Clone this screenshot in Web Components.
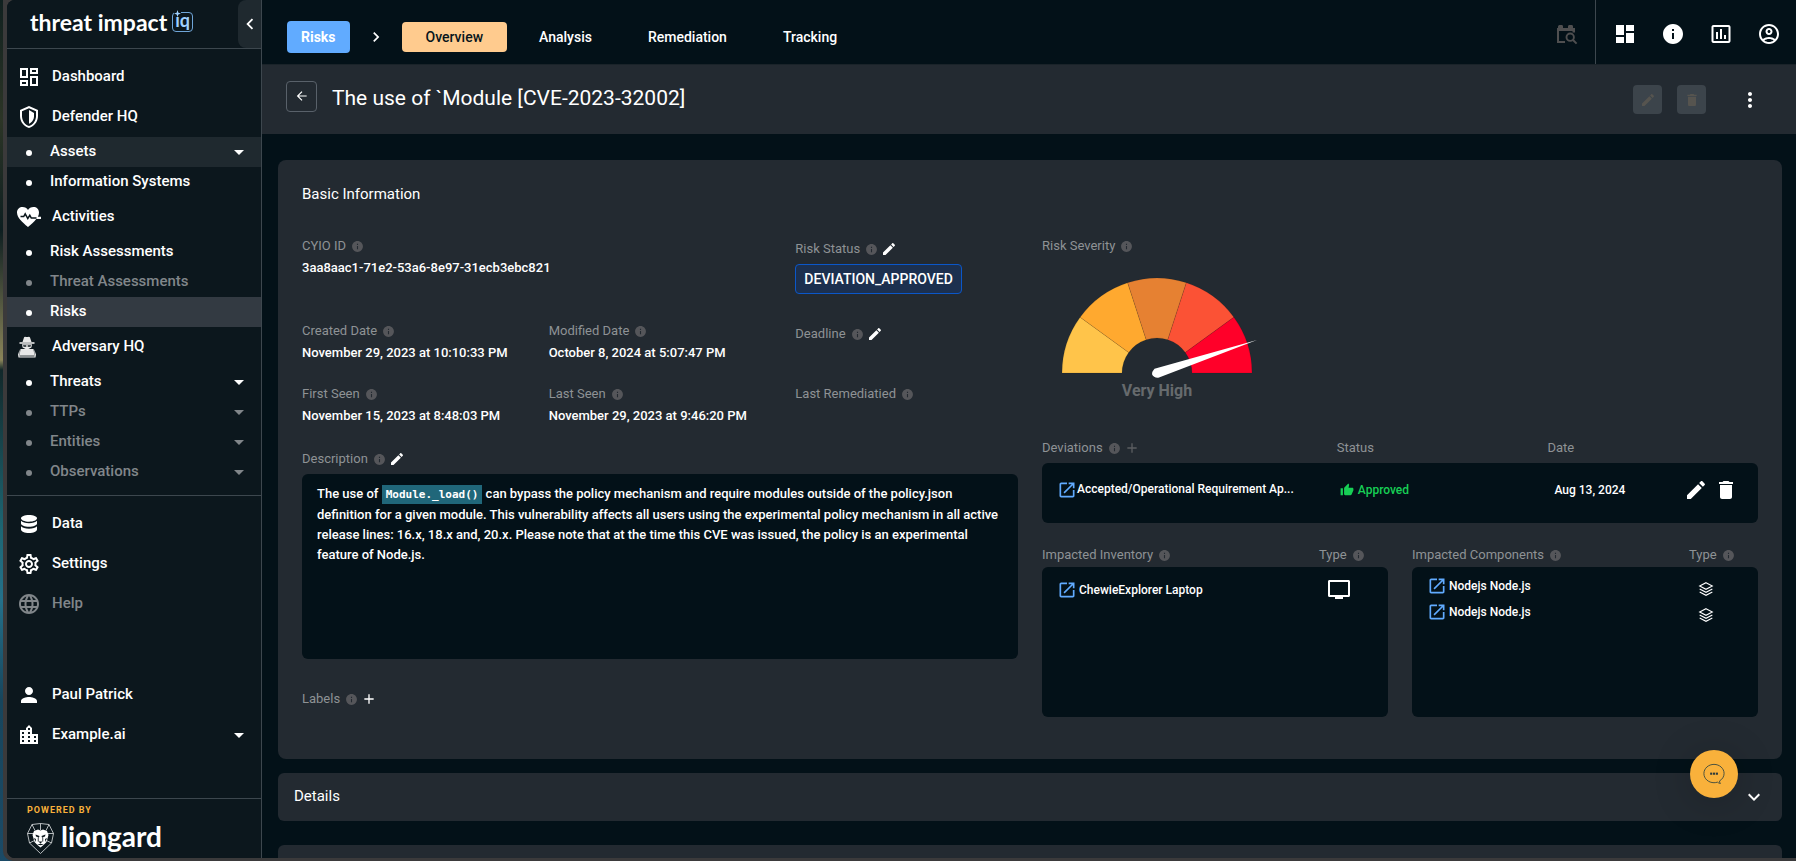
<!DOCTYPE html>
<html lang="en">
<head>
<meta charset="utf-8">
<title>Threat Impact IQ – Risk overview</title>
<style>
html, body { margin: 0; height: 100%; }
body {
  --bg: #031118; --panel: #232a31; --side: #0c171d; --side-open: #1f292f; --side-active: #333a42;
  --line: #3d474e; --muted: #8e9295; --dim: #55565a; --frame: #3b3a3b; --blue: #61abff; --amber: #f9b13b;
  font-family: Roboto, "Liberation Sans", sans-serif; font-size: 13px; line-height: 20px; font-weight: 500; color: #fff;
  background: linear-gradient(#10201f 0, #2c3526 120px, #0d1e20 230px, #8a8459 360px, #12282a 370px, #1d6673 530px, #24708a 600px, #17455c 700px, #1b4a66 861px);
  overflow: hidden;
}
</style>
</head>
<body>
<app-window>
  <side-nav slot="side"></side-nav>
  <top-bar></top-bar>
  <page-header heading="The use of `Module [CVE-2023-32002]"></page-header>
  <risk-page></risk-page>
</app-window>
<chat-launcher></chat-launcher>

<script>
const P = d => `<path d="${d}"/>`;
const ICONS = {
  dashboardOutline: P('M19 5v2h-4V5h4M9 5v6H5V5h4m10 8v6h-4v-6h4M9 17v2H5v-2h4M21 3h-8v6h8V3zM11 3H3v10h8V3zm10 8h-8v10h8V11zm-10 4H3v6h8v-6z'),
  dashboard: P('M3 13h8V3H3v10zm0 8h8v-6H3v6zm10 0h8V11h-8v10zm0-18v6h8V3h-8z'),
  shield: P('M21 11c0 5.55-3.84 10.74-9 12-5.16-1.26-9-6.45-9-12V5l9-4 9 4v6m-9 10c3.75-1 7-5.46 7-9.78V6.3l-7-3.12L5 6.3v4.92C5 15.54 8.25 20 12 21z') + P('M12 5l5 3v3.5c0 3-2.2 6-5 7.2z'),
  heart: P('M11 22C5 17 0 12.500 0 7.500 0 4 2.700 2 5.500 2 8 2 10 3.300 11 5c1-1.700 3-3 5.500-3C19.500 2 22 4 22 7.500c0 1.500-.4 2.900-1.100 4.200H24v2.400h-4.700C17.300 16.900 14.300 19.300 11 22z') + '<path d="M3.500 11.500h3.200l1.500-2.700 2.600 4.700 2-3.200 1.500 2.700h5.200" fill="none" stroke="#0c171d" stroke-width="1.500"/>',
  spy: '<g fill="#e8e8e8"><path d="M7 2.500C7.500 1 9 2 10 2s2.500-1 3 .5L14.500 7H5.500z"/><path d="M2.500 7.200h15v1.600h-15z"/><path d="M5 9.300h10l-.6 3.200-4.400 2.200-4.400-2.200z"/><path d="M3.500 14h13l1 6.500h-15z"/><path d="M2.800 14.500L1 19.500l.5 3h17l.5-3-1.800-5 .3 6H2.500z"/></g><path d="M6 10.300h3.300v1.500H6.600zM10.700 10.300H14l-.6 1.500h-2.700z" fill="#0c171d"/><path d="M2.500 21.200h15" stroke="#0c171d" stroke-width=".6"/>',
  data: P('M12 3c4.400 0 8 1.450 8 3.250S16.400 9.700 12 9.700 4 8.100 4 6.250 7.600 3 12 3z') + P('M4 8.700c1.300 1.500 4.300 2.500 8 2.500s6.700-1 8-2.500v2.700c0 1.800-3.600 3.300-8 3.300s-8-1.500-8-3.300z') + P('M4 14.300c1.300 1.500 4.300 2.400 8 2.400s6.700-.9 8-2.400v3.200C20 19.400 16.400 21 12 21s-8-1.600-8-3.500z'),
  settings: P('M19.430 12.980c.04-.32.07-.64.07-.98 0-.34-.03-.66-.07-.98l2.110-1.650c.19-.15.24-.42.12-.64l-2-3.460c-.09-.16-.26-.25-.44-.25-.06 0-.12.010-.17.030l-2.490 1c-.52-.4-1.080-.73-1.690-.98l-.38-2.650C14.460 2.180 14.250 2 14 2h-4c-.25 0-.46.18-.49.42l-.38 2.650c-.61.25-1.170.59-1.690.98l-2.490-1c-.06-.02-.12-.03-.18-.03-.17 0-.34.09-.43.25l-2 3.460c-.13.22-.07.49.12.64l2.110 1.650c-.04.32-.07.65-.07.98 0 .33.030.66.070.98l-2.110 1.650c-.19.15-.24.42-.12.64l2 3.460c.09.16.26.25.44.25.06 0 .12-.01.17-.03l2.490-1c.52.4 1.080.73 1.690.98l.38 2.650c.03.24.24.42.49.42h4c.25 0 .46-.18.49-.42l.38-2.650c.61-.25 1.170-.59 1.690-.98l2.490 1c.06.02.12.03.18.03.17 0 .34-.09.43-.25l2-3.460c.12-.22.07-.49-.12-.64l-2.110-1.650zm-1.980-1.710c.04.31.05.52.05.73 0 .21-.02.43-.05.73l-.14 1.130.89.7 1.080.84-.7 1.210-1.270-.51-1.040-.42-.9.680c-.43.32-.84.56-1.250.73l-1.060.43-.16 1.130-.2 1.350h-1.400l-.19-1.350-.16-1.130-1.060-.43c-.43-.18-.83-.41-1.230-.71l-.91-.7-1.060.43-1.270.51-.7-1.210 1.080-.84.89-.7-.14-1.130c-.03-.31-.05-.54-.05-.74s.02-.43.05-.73l.14-1.130-.89-.7-1.080-.84.7-1.210 1.270.51 1.040.42.9-.68c.43-.32.84-.56 1.250-.73l1.060-.43.16-1.130.2-1.350h1.390l.19 1.350.16 1.130 1.060.43c.43.18.83.41 1.230.71l.91.7 1.060-.43 1.270-.51.7 1.210-1.070.85-.89.7.14 1.130zM12 8c-2.210 0-4 1.790-4 4s1.790 4 4 4 4-1.790 4-4-1.790-4-4-4zm0 6c-1.100 0-2-.9-2-2s.9-2 2-2 2 .9 2 2-.9 2-2 2z'),
  globe: P('M11.990 2C6.470 2 2 6.480 2 12s4.470 10 9.990 10C17.520 22 22 17.520 22 12S17.520 2 11.990 2zm6.930 6h-2.950c-.32-1.250-.78-2.450-1.380-3.560 1.840.63 3.370 1.910 4.330 3.560zM12 4.040c.83 1.200 1.480 2.530 1.910 3.960h-3.820c.43-1.430 1.080-2.760 1.910-3.960zM4.260 14C4.100 13.360 4 12.690 4 12s.1-1.360.26-2h3.380c-.08.66-.14 1.320-.14 2 0 .68.06 1.340.14 2H4.260zm.82 2h2.950c.32 1.250.78 2.450 1.380 3.560-1.840-.63-3.370-1.900-4.330-3.560zm2.950-8H5.080c.96-1.660 2.490-2.930 4.330-3.560C8.810 5.550 8.350 6.750 8.030 8zM12 19.960c-.83-1.200-1.480-2.530-1.910-3.960h3.820c-.43 1.430-1.080 2.760-1.910 3.960zM14.340 14H9.660c-.09-.66-.16-1.320-.16-2 0-.68.07-1.350.16-2h4.680c.09.65.16 1.320.16 2 0 .68-.07 1.340-.16 2zm.25 5.560c.6-1.110 1.060-2.310 1.380-3.560h2.950c-.96 1.650-2.490 2.930-4.330 3.560zM16.360 14c.08-.66.14-1.320.14-2 0-.68-.06-1.340-.14-2h3.380c.16.64.26 1.310.26 2s-.1 1.360-.26 2h-3.380z'),
  person: P('M12 12c2.210 0 4-1.790 4-4s-1.790-4-4-4-4 1.790-4 4 1.790 4 4 4zm0 2c-2.670 0-8 1.340-8 4v2h16v-2c0-2.660-5.330-4-8-4z'),
  city: P('M15 11V5l-3-3-3 3v2H3v14h18V11h-6zm-8 8H5v-2h2v2zm0-4H5v-2h2v2zm0-4H5V9h2v2zm6 8h-2v-2h2v2zm0-4h-2v-2h2v2zm0-4h-2V9h2v2zm0-4h-2V5h2v2zm6 12h-2v-2h2v2zm0-4h-2v-2h2v2z'),
  info: P('M12 2C6.480 2 2 6.480 2 12s4.480 10 10 10 10-4.480 10-10S17.520 2 12 2zm1 15h-2v-6h2v6zm0-8h-2V7h2v2z'),
  chart: P('M9 17H7v-7h2v7zm4 0h-2V7h2v10zm4 0h-2v-4h2v4zm2.500 2.100h-15V5h15v14.100zm0-16.100h-15c-1.100 0-2 .9-2 2v14c0 1.100.9 2 2 2h15c1.100 0 2-.9 2-2V5c0-1.100-.9-2-2-2z'),
  account: P('M12 2C6.480 2 2 6.480 2 12s4.480 10 10 10 10-4.480 10-10S17.520 2 12 2zM7.350 18.500C8.660 17.560 10.260 17 12 17s3.340.56 4.650 1.500C15.340 19.440 13.740 20 12 20s-3.340-.56-4.650-1.500zm10.790-1.380C16.450 15.800 14.320 15 12 15s-4.450.8-6.140 2.120C4.700 15.730 4 13.950 4 12c0-4.420 3.580-8 8-8s8 3.580 8 8c0 1.950-.7 3.730-1.860 5.120zM12 6c-1.930 0-3.500 1.570-3.500 3.500S10.070 13 12 13s3.500-1.570 3.500-3.500S13.930 6 12 6zm0 5c-.83 0-1.500-.67-1.500-1.500S11.170 8 12 8s1.500.67 1.500 1.500S12.830 11 12 11z'),
  edit: P('M3 17.250V21h3.750L17.810 9.940l-3.750-3.750L3 17.250zM20.710 7.040c.39-.39.39-1.020 0-1.410l-2.340-2.340c-.39-.39-1.020-.39-1.410 0l-1.830 1.830 3.750 3.750 1.830-1.830z'),
  trash: P('M6 19c0 1.100.9 2 2 2h8c1.100 0 2-.9 2-2V7H6v12zM19 4h-3.500l-1-1h-5l-1 1H5v2h14V4z'),
  more: P('M12 8c1.100 0 2-.9 2-2s-.9-2-2-2-2 .9-2 2 .9 2 2 2zm0 2c-1.100 0-2 .9-2 2s.9 2 2 2 2-.9 2-2-.9-2-2-2zm0 6c-1.100 0-2 .9-2 2s.9 2 2 2 2-.9 2-2-.9-2-2-2z'),
  launch: P('M19 19H5V5h7V3H5c-1.110 0-2 .9-2 2v14c0 1.100.89 2 2 2h14c1.100 0 2-.9 2-2v-7h-2v7zM14 3v2h3.590l-9.830 9.830 1.410 1.410L19 6.410V10h2V3h-7z'),
  thumb: P('M1 21h4V9H1v12zm22-11c0-1.100-.9-2-2-2h-6.310l.95-4.570.03-.32c0-.41-.17-.79-.44-1.060L14.170 1 7.590 7.590C7.220 7.950 7 8.450 7 9v10c0 1.100.9 2 2 2h9c.83 0 1.540-.5 1.840-1.220l3.020-7.050c.09-.23.14-.47.14-.73v-2z'),
  plus: P('M19 13h-6v6h-2v-6H5v-2h6V5h2v6h6v2z'),
  caret: P('M7 10l5 5 5-5z'),
  chevronLeft: P('M15.410 7.410L14 6l-6 6 6 6 1.410-1.410L10.830 12z'),
  chevronRight: P('M8.590 16.590L10 18l6-6-6-6-1.410 1.410L13.170 12z'),
  chevronDown: P('M7.410 8.590L12 13.170l4.590-4.580L18 10l-6 6-6-6z'),
  back: '<path d="M20 12H4.500M12 4.500L4.500 12l7.500 7.500" fill="none" stroke="currentColor" stroke-width="2"/>',
  findInWork: P('M4 6V4.500C4 3.500 5 3 6 3h1.500C8.600 3 9 3.700 9 4.500V6h5V4.500c0-.9.6-1.500 1.500-1.500h2c1 0 1.500.6 1.500 1.500V6h2v4.500h-2.500V9H5v10h6v2H3V6z') + '<circle cx="16.200" cy="15.200" r="3.700" fill="none" stroke="currentColor" stroke-width="1.900"/><path d="M19 18l3.600 3.600" stroke="currentColor" stroke-width="2"/>',
  monitor: P('M21.500 2h-19C1.600 2 1 2.700 1 3.500v14c0 .8.600 1.500 1.500 1.500H8v2h8v-2h5.500c.9 0 1.500-.7 1.500-1.500v-14c0-.8-.6-1.500-1.500-1.500zM21 17H3V4h18z'),
  layers: '<g fill="none" stroke="currentColor" stroke-width="1.600"><path d="M12 2.500l9.500 5-9.500 5-9.500-5z"/><path d="M2.500 12l9.500 5 9.500-5M2.500 16.500l9.500 5 9.500-5"/></g>',
  chat: '<path d="M12 1.500C6 1.500 1 5.800 1 11.500s5 10 11 10c1.300 0 2.600-.2 3.800-.6.800.8 2 1.300 3.200 1.400-.7-.8-1-1.800-1-2.700 3-1.800 5-4.700 5-8.100 0-5.700-5-10-11-10z" fill="none" stroke="#3c4a3f" stroke-width="1"/><g fill="#2c3a3c"><rect x="7.800" y="10.500" width="2.300" height="2.300"/><rect x="10.900" y="10.500" width="2.300" height="2.300"/><rect x="14" y="10.500" width="2.300" height="2.300"/></g>'
};

/* Small base: every element clones its own template into an open root. */
class Base extends HTMLElement {
  connectedCallback() {
    if (this.shadowRoot) return;
    const t = document.createElement('template');
    t.innerHTML = `<style>:host,*{box-sizing:border-box}a{color:inherit;text-decoration:none}button{font:inherit;color:inherit;background:none;border:0;padding:0;margin:0;display:inline-flex;align-items:center;justify-content:center;cursor:pointer}ul,h1,h2,p{margin:0;padding:0;font:inherit;list-style:none}${this.css()}</style>${this.html()}`;
    this.attachShadow({ mode: 'open' }).append(t.content.cloneNode(true));
  }
  at(n) { return this.getAttribute(n) || ''; }
}

customElements.define('ui-icon', class extends Base {
  css() { const s = this.at('size') || 24; return `:host{display:inline-flex;flex:none;width:${s}px;height:${s}px}svg{width:100%;height:100%;fill:currentColor}`; }
  html() { return `<svg viewBox="0 0 24 24" aria-hidden="true">${ICONS[this.at('name')]}</svg>`; }
});

customElements.define('app-window', class extends Base {
  css() { return `
    :host{display:block;height:100vh;padding-left:3px}
    .frame{height:100%;border-left:4px solid var(--frame);border-bottom:3px solid var(--frame);border-bottom-left-radius:10px;background:var(--frame)}
    .inner{display:grid;grid-template-columns:255px minmax(0,1fr);height:100%;border-radius:8px 0 0 8px;overflow:hidden;background:var(--bg)}
    main{min-width:0;overflow:hidden}`; }
  html() { return `<div class="frame"><div class="inner"><slot name="side"></slot><main><slot></slot></main></div></div>`; }
});

customElements.define('nav-item', class extends Base {
  css() { return `
    :host{display:block}
    a{display:flex;align-items:center;height:40px;padding:0 10px;font-size:15px}
    ui-icon[name]{margin-right:11px}
    span{flex:1;padding-bottom:2px}
    a.sub{height:30px}
    .dot{width:6px;height:6px;border-radius:50%;background:currentColor;margin:2px 18px 0 9px;flex:none}
    :host([off]){color:#81868a}
    :host([open]){background:var(--side-open)}
    :host([active]){background:var(--side-active)}
    ui-icon.caret{margin:0}`; }
  html() {
    const sub = this.hasAttribute('sub');
    return `<a href="#" class="${sub ? 'sub' : ''}">${sub ? '<i class="dot"></i>' : `<ui-icon name="${this.at('icon')}"></ui-icon>`}<span><slot></slot></span>${this.hasAttribute('more') ? '<ui-icon class="caret" name="caret"></ui-icon>' : ''}</a>`;
  }
});

customElements.define('side-nav', class extends Base {
  css() { return `
    :host{display:flex;flex-direction:column;background:var(--side);border-right:1px solid var(--line);min-height:0}
    .brand{display:flex;height:49px;border-bottom:1px solid var(--line);padding-left:23px;flex:none}
    .name{flex:1;display:flex;align-items:center;gap:5px;font:700 23px/28px Lato,"Liberation Sans",sans-serif;padding-bottom:4px}
    .iq{position:relative;width:21px;height:20px;border:1px solid #6fa5d8;border-radius:4px;color:#9fd0ff;font-size:18px;line-height:14px;text-align:center}
    .iq svg{position:absolute;left:1px;top:-3px;width:7px;height:7px;fill:#9fd0ff;background:var(--side)}
    .fold{width:23px;background:var(--side-open);border-radius:8px 0 0 8px}
    nav{flex:none;padding:8px 0}
    nav+nav{border-top:1px solid var(--line)}
    .account{margin-top:auto;padding-bottom:43px}
    footer{flex:none;height:60px;border-top:1px solid var(--line);padding:4px 0 0 20px}
    .by{font-size:9px;line-height:14px;font-weight:700;color:var(--amber);letter-spacing:1px}
    .lion{display:flex;align-items:center;gap:7px;font:700 28px/32px Lato,"Liberation Sans",sans-serif;margin-top:3px}
    .lion svg{width:27px;height:31px}
    .lion span{padding-bottom:4px}`; }
  html() { return `
    <div class="brand"><div class="name"><span>threat impact</span><span class="iq">iq<svg viewBox="0 0 8 8"><path d="M4 0l1 3 3 1-3 1-1 3-1-3-3-1 3-1z"/></svg></span></div>
      <button class="fold" aria-label="Collapse menu"><ui-icon name="chevronLeft" size="22"></ui-icon></button></div>
    <nav aria-label="Main">
      <nav-item icon="dashboardOutline">Dashboard</nav-item>
      <nav-item icon="shield">Defender HQ</nav-item>
      <nav-item sub more open>Assets</nav-item>
      <nav-item sub>Information Systems</nav-item>
      <nav-item icon="heart">Activities</nav-item>
      <nav-item sub>Risk Assessments</nav-item>
      <nav-item sub off>Threat Assessments</nav-item>
      <nav-item sub active>Risks</nav-item>
      <nav-item icon="spy">Adversary HQ</nav-item>
      <nav-item sub more>Threats</nav-item>
      <nav-item sub more off>TTPs</nav-item>
      <nav-item sub more off>Entities</nav-item>
      <nav-item sub more off>Observations</nav-item>
    </nav>
    <nav aria-label="Tools">
      <nav-item icon="data">Data</nav-item>
      <nav-item icon="settings">Settings</nav-item>
      <nav-item icon="globe" off>Help</nav-item>
    </nav>
    <div class="account">
      <nav-item icon="person">Paul Patrick</nav-item>
      <nav-item icon="city" more>Example.ai</nav-item>
    </div>
    <footer><div class="by">POWERED BY</div>
      <div class="lion"><svg viewBox="0 0 27 31" aria-hidden="true">
        <g fill="none" stroke="#dfe3e5" stroke-width=".8"><path d="M5 1.500L13.500.5 22 1.500l4.500 9-2 9.500-11 10.500L2.500 20l-2-9.500z"/><path d="M5 1.500l3 6M22 1.500l-3 6M.5 10.500l7 0M26.500 10.500h-7M2.500 20l6-3M24.500 20l-6-3M13.500.5V7"/></g>
        <path d="M7 8l4-1.500 2.500 1 2.500-1L20 8l1.500 4-2 7-3 3-3 2.500-3-2.500-3-3-2-7z" fill="#fff"/>
        <path d="M8.500 11.500l4 1.500-.5 1.500-3-1zM18.500 11.500l-4 1.500.5 1.500 3-1zM11.500 18.500h4l-2 2zM10.800 14.500h.8v4h-.8zM15.400 14.500h.8v4h-.8zM10 21.500l3.500-.8 3.500.8-3.500.8zM7 15l2 1-.5 3zM20 15l-2 1 .5 3z" fill="#0c171d"/></svg><span>liongard</span></div>
    </footer>`; }
});

customElements.define('top-bar', class extends Base {
  css() { return `
    :host{display:flex;height:65px;border-bottom:1px solid #1a2329;align-items:stretch;padding-right:15px}
    nav{display:flex;align-items:center;gap:8px;flex:1;padding:10px 0 0 25px;font-size:14px}
    .root{height:32px;padding:0 14px;border-radius:4px;background:var(--blue);font-weight:700;display:flex;align-items:center}
    .sep{margin:0 8px;display:flex}
    nav a.tab{height:30px;padding:0 24px;border-radius:4px;display:flex;align-items:center}
    a.on{background:#ffcb8e;color:#07151c}
    .off{color:#4f4f50;padding:4px 17px 0 0}
    .tools{display:flex;gap:24px;border-left:1px solid var(--line);padding:4px 0 0 17px}`; }
  html() { return `
    <nav aria-label="Risk"><a class="root" href="#">Risks</a><span class="sep"><ui-icon name="chevronRight" size="20"></ui-icon></span><a class="tab on" href="#" aria-current="page">Overview</a><a class="tab" href="#">Analysis</a><a class="tab" href="#">Remediation</a><a class="tab" href="#">Tracking</a></nav>
    <button class="off" aria-label="Find" disabled><ui-icon name="findInWork"></ui-icon></button>
    <div class="tools"><button aria-label="Dashboards"><ui-icon name="dashboard"></ui-icon></button><button aria-label="About"><ui-icon name="info"></ui-icon></button><button aria-label="Reports"><ui-icon name="chart"></ui-icon></button><button aria-label="Account"><ui-icon name="account"></ui-icon></button></div>`; }
});

customElements.define('page-header', class extends Base {
  css() { return `
    :host{display:flex;align-items:center;height:69px;background:var(--panel);padding:0 34px 3px 24px}
    .back{width:31px;height:31px;border:1px solid #59616a;border-radius:4px;margin:0 15px 4px 0}
    h1{flex:1;font-size:21px;line-height:32px;font-weight:400}
    .act{width:29px;height:29px;border-radius:4px;background:#3c444b;color:#56544f;margin:3px 15px 0 0}
    .more{margin:3px 0 0 17px}`; }
  html() { return `<button class="back" aria-label="Back"><ui-icon name="back" size="14"></ui-icon></button><h1>${this.at('heading')}</h1>
    <button class="act" aria-label="Edit" disabled><ui-icon name="edit" size="16"></ui-icon></button><button class="act" aria-label="Delete" disabled><ui-icon name="trash" size="16"></ui-icon></button><button class="more" aria-label="More"><ui-icon name="more"></ui-icon></button>`; }
});

/* Muted caption with an info mark, and an optional edit or add button. */
customElements.define('field-label', class extends Base {
  css() { return `
    :host{display:flex;align-items:center;height:20px;color:var(--muted);font-weight:400}
    :host([tall]){height:26px}
    .i{color:var(--dim);margin-left:5px}
    button{color:#fff;margin-left:3px}
    button:disabled{color:#5b5d60}`; }
  html() {
    const a = this.at('action');
    return `<slot></slot><ui-icon class="i" name="info" size="13"></ui-icon>${a ? `<button aria-label="${a === 'plus' ? 'Add' : 'Edit'}" ${this.hasAttribute('locked') ? 'disabled' : ''}><ui-icon name="${a}" size="16"></ui-icon></button>` : ''}`;
  }
});

customElements.define('info-field', class extends Base {
  css() { return `:host{display:block}div{margin-top:2px}`; }
  html() { const a = this.at('action'); return `<field-label ${a ? `tall action="${a}"` : ''}>${this.at('label')}</field-label><div><slot></slot></div>`; }
});

customElements.define('severity-gauge', class extends Base {
  css() { return `:host{display:block;width:230px;margin-top:20px;text-align:center;font-size:16px;font-weight:700;color:#666a6d}svg{display:block;width:230px;height:105px}`; }
  html() {
    const c = ['#ffc44a', '#ffa92f', '#e68132', '#fb5235', '#ff0029'];
    const pt = (r, d) => { const a = d * Math.PI / 180; return `${(115 - r * Math.cos(a)).toFixed(2)} ${(97 - r * Math.sin(a)).toFixed(2)}`; };
    const seg = c.map((f, i) => `<path fill="${f}" stroke="#00000030" stroke-width=".5" d="M${pt(95, i * 36)}A95 95 0 0 1 ${pt(95, i * 36 + 36)}L${pt(35, i * 36 + 36)}A35 35 0 0 0 ${pt(35, i * 36)}z"/>`).join('');
    return `<svg viewBox="0 0 230 105" role="img" aria-label="Severity gauge">${seg}<path d="M215 64L117 101.500c-3 .8-6-1-6.800-2.800-.6-2.500.8-4 2.300-6z" fill="#fff"/></svg><slot></slot>`;
  }
});

const TABLE = `table{display:block;font-size:12px}thead{display:block;color:var(--muted);font-size:13px}tbody{display:block;background:var(--bg);border-radius:6px}tr{display:grid;align-items:center}th,td{display:flex;align-items:center;padding:0;font-weight:inherit;text-align:left;min-width:0}th{font-weight:400}a ui-icon{color:var(--blue)}`;

customElements.define('deviation-list', class extends Base {
  css() { return TABLE + `
    :host{display:block;margin-top:37px}
    tr{grid-template-columns:7fr 5fr 5fr}
    thead{padding-bottom:5px}
    tbody{height:60px;padding-top:12px}
    tbody tr{height:30px}
    td:first-child{padding-left:15px}
    td a{display:flex;align-items:center;min-width:0}
    td a span{padding-bottom:2px}
    .ok{color:#17cf55;gap:4px;padding-left:3px}
    .when{padding:0 20px 0 7px;gap:6px}
    time{flex:1}`; }
  html() { return `<table>
    <thead><tr><th><field-label action="plus" locked>Deviations</field-label></th><th>Status</th><th>Date</th></tr></thead>
    <tbody><tr><td><a href="#"><ui-icon name="launch" size="20"></ui-icon><span>Accepted/Operational Requirement Ap...</span></a></td>
      <td class="ok"><ui-icon name="thumb" size="14"></ui-icon>Approved</td>
      <td class="when"><time datetime="2024-08-13">Aug 13, 2024</time><button aria-label="Edit deviation"><ui-icon name="edit"></ui-icon></button><button aria-label="Delete deviation"><ui-icon name="trash"></ui-icon></button></td></tr></tbody></table>`; }
});

customElements.define('impact-list', class extends Base {
  css() { const one = this.at('kind') === 'monitor'; return TABLE + `
    :host{display:block}
    thead{padding-bottom:2px}
    tr{grid-template-columns:minmax(0,1fr) 69px}
    tbody{height:150px;padding:${one ? '10px' : '6px'} 0 0 15px}
    tbody tr{height:26px;grid-template-columns:minmax(0,1fr) 64px}
    td a{display:flex;align-items:center;gap:2px}
    td a span{padding-bottom:1px}
    ${one ? 'td:last-child{padding-left:3px}' : 'td:last-child{padding-left:4px;padding-top:5px}'}`; }
  html() {
    const k = this.at('kind'), rows = this.at('rows').split('|');
    return `<table><thead><tr><th><field-label>${this.at('label')}</field-label></th><th><field-label>Type</field-label></th></tr></thead>
      <tbody>${rows.map(r => `<tr><td><a href="#"><ui-icon name="launch" size="20"></ui-icon><span>${r}</span></a></td><td><ui-icon name="${k}" size="${k === 'monitor' ? 24 : 16}"></ui-icon></td></tr>`).join('')}</tbody></table>`;
  }
});

customElements.define('risk-page', class extends Base {
  css() { return `
    :host{display:block;padding:26px 14px 0 16px}
    section{background:var(--panel);border-radius:8px}
    .basic{padding:24px 24px 42px}
    h2{font-size:15px;font-weight:400}
    .cols{display:grid;grid-template-columns:repeat(2,minmax(0,1fr));gap:24px;margin-top:32px}
    .fields{display:grid;grid-template-columns:repeat(3,minmax(0,1fr));column-gap:24px;row-gap:21px}
    .fields>.id{grid-column:span 2;min-height:64px}
    .badge{display:inline-flex;align-items:center;height:30px;padding:0 8px;border:1px solid #0b57c9;border-radius:4px;background:#1c304f;font-size:14px}
    .desc{margin-top:20px}
    .text{margin-top:2px;height:185px;padding:10px 15px;background:var(--bg);border-radius:6px}
    code{font:700 11px/20px "DejaVu Sans Mono","Liberation Mono",monospace;background:#20677a;padding:3px 4px}
    .labels{margin-top:27px}
    .pair{display:grid;grid-template-columns:repeat(2,minmax(0,1fr));gap:24px;margin-top:22px}
    .fold{display:flex;align-items:center;height:48px;margin-top:14px;padding:0 16px;border-radius:6px}
    .fold h2{flex:1;padding-bottom:2px}
    .next{height:48px;margin-top:24px;border-radius:6px}`; }
  html() { return `
    <section class="basic"><h2>Basic Information</h2>
      <div class="cols"><div>
        <div class="fields">
          <info-field class="id" label="CYIO ID">3aa8aac1-71e2-53a6-8e97-31ecb3ebc821</info-field>
          <info-field label="Risk Status" action="edit"><span class="badge">DEVIATION_APPROVED</span></info-field>
          <info-field label="Created Date">November 29, 2023 at 10:10:33 PM</info-field>
          <info-field label="Modified Date">October 8, 2024 at 5:07:47 PM</info-field>
          <info-field label="Deadline" action="edit"></info-field>
          <info-field label="First Seen">November 15, 2023 at 8:48:03 PM</info-field>
          <info-field label="Last Seen">November 29, 2023 at 9:46:20 PM</info-field>
          <info-field label="Last Remediatied"></info-field>
        </div>
        <field-label class="desc" tall action="edit">Description</field-label>
        <p class="text">The use of <code>Module._load()</code> can bypass the policy mechanism and require modules outside of the policy.json definition for a given module. This vulnerability affects all users using the experimental policy mechanism in all active release lines: 16.x, 18.x and, 20.x. Please note that at the time this CVE was issued, the policy is an experimental feature of Node.js.</p>
        <field-label class="labels" tall action="plus">Labels</field-label>
      </div><div>
        <field-label>Risk Severity</field-label>
        <severity-gauge>Very High</severity-gauge>
        <deviation-list></deviation-list>
        <div class="pair"><impact-list kind="monitor" label="Impacted Inventory" rows="ChewieExplorer Laptop"></impact-list><impact-list kind="layers" label="Impacted Components" rows="Nodejs Node.js|Nodejs Node.js"></impact-list></div>
      </div></div>
    </section>
    <section class="fold"><h2>Details</h2><button aria-label="Expand details"><ui-icon name="chevronDown"></ui-icon></button></section>
    <section class="next"></section>`; }
});

customElements.define('chat-launcher', class extends Base {
  css() { return `:host{position:fixed;right:58px;bottom:63px;border-radius:50%;box-shadow:0 4px 40px #0003}button{width:48px;height:48px;border-radius:50%;background:var(--amber)}`; }
  html() { return `<button aria-label="Open chat"><ui-icon name="chat" size="22"></ui-icon></button>`; }
});
</script>
</body>
</html>
